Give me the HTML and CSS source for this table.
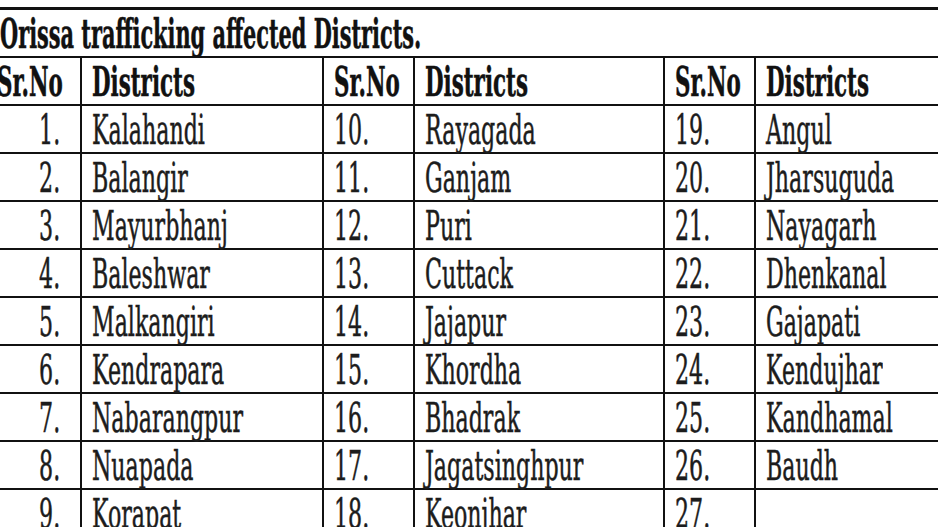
FILE: index.html
```html
<!DOCTYPE html>
<html>
<head>
<meta charset="utf-8">
<link rel="stylesheet" href="styles.css">
</head>
<body>
<div class="page">
<table class="districts">
  <colgroup>
    <col class="c-no1"><col class="c-name1"><col class="c-no"><col class="c-name2"><col class="c-no"><col class="c-name3">
  </colgroup>
  <tr class="title-row"><th colspan="6" class="title"><span class="tx b t">Orissa trafficking affected Districts.</span></th></tr>
  <tr class="head">
    <th class="no1"><span class="tx b">Sr.No</span></th><th><span class="tx b">Districts</span></th>
    <th><span class="tx b">Sr.No</span></th><th><span class="tx b">Districts</span></th>
    <th><span class="tx b">Sr.No</span></th><th><span class="tx b">Districts</span></th>
  </tr>
  <tr><td class="num"><span class="tx r">1.</span></td><td><span class="tx">Kalahandi</span></td><td><span class="tx">10.</span></td><td><span class="tx">Rayagada</span></td><td><span class="tx">19.</span></td><td><span class="tx">Angul</span></td></tr>
  <tr><td class="num"><span class="tx r">2.</span></td><td><span class="tx">Balangir</span></td><td><span class="tx">11.</span></td><td><span class="tx">Ganjam</span></td><td><span class="tx">20.</span></td><td><span class="tx">Jharsuguda</span></td></tr>
  <tr><td class="num"><span class="tx r">3.</span></td><td><span class="tx">Mayurbhanj</span></td><td><span class="tx">12.</span></td><td><span class="tx">Puri</span></td><td><span class="tx">21.</span></td><td><span class="tx">Nayagarh</span></td></tr>
  <tr><td class="num"><span class="tx r">4.</span></td><td><span class="tx">Baleshwar</span></td><td><span class="tx">13.</span></td><td><span class="tx">Cuttack</span></td><td><span class="tx">22.</span></td><td><span class="tx">Dhenkanal</span></td></tr>
  <tr><td class="num"><span class="tx r">5.</span></td><td><span class="tx">Malkangiri</span></td><td><span class="tx">14.</span></td><td><span class="tx">Jajapur</span></td><td><span class="tx">23.</span></td><td><span class="tx">Gajapati</span></td></tr>
  <tr><td class="num"><span class="tx r">6.</span></td><td><span class="tx">Kendrapara</span></td><td><span class="tx">15.</span></td><td><span class="tx">Khordha</span></td><td><span class="tx">24.</span></td><td><span class="tx">Kendujhar</span></td></tr>
  <tr><td class="num"><span class="tx r">7.</span></td><td><span class="tx">Nabarangpur</span></td><td><span class="tx">16.</span></td><td><span class="tx">Bhadrak</span></td><td><span class="tx">25.</span></td><td><span class="tx">Kandhamal</span></td></tr>
  <tr><td class="num"><span class="tx r">8.</span></td><td><span class="tx">Nuapada</span></td><td><span class="tx">17.</span></td><td><span class="tx">Jagatsinghpur</span></td><td><span class="tx">26.</span></td><td><span class="tx">Baudh</span></td></tr>
  <tr><td class="num"><span class="tx r">9.</span></td><td><span class="tx">Korapat</span></td><td><span class="tx">18.</span></td><td><span class="tx">Keonjhar</span></td><td><span class="tx">27.</span></td><td></td></tr>
</table>
</div>
</body>
</html>
```

FILE: styles.css
```css
html, body {
  margin: 0;
  padding: 0;
  background: #fff;
  overflow: hidden;
}
.page {
  width: 938px;
  height: 527px;
  overflow: hidden;
  padding-top: 7px;
  box-sizing: border-box;
}
.districts {
  border-collapse: collapse;
  table-layout: fixed;
  width: 980px;
  margin-left: -15px;
  font-family: "DejaVu Serif", serif;
  font-stretch: condensed;
  font-size: 41px;
  color: #1c1c1c;
}
.c-no1 { width: 95px; }
.c-name1 { width: 242px; }
.c-no { width: 91px; }
.c-name2 { width: 250px; }
.c-name3 { width: 211px; }
.districts th,
.districts td {
  border: 2px solid #111;
  padding: 0 0 1px 10px;
  height: 45px;
  line-height: 41px;
  text-align: left;
  vertical-align: bottom;
  white-space: nowrap;
  overflow: visible;
  font-weight: normal;
}
.districts th.title {
  border-top-width: 3px;
  padding-left: 13px;
}
.districts td.num {
  text-align: right;
  padding: 0 20px 1px 0;
}
.tx {
  display: inline-block;
  transform: scaleX(0.6);
  transform-origin: left center;
  -webkit-text-stroke: 0.5px #1c1c1c;
}
.tx.r {
  transform-origin: right center;
}
.tx.b {
  font-weight: bold;
  transform: scaleX(0.58);
  color: #111;
  -webkit-text-stroke: 0.5px #111;
}
.tx.t {
  transform: scaleX(0.565);
}
```
